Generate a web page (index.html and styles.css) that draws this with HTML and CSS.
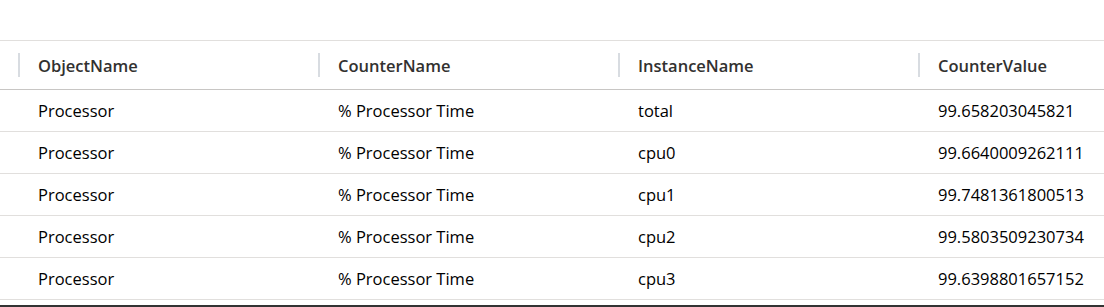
FILE: index.html
```html
<!DOCTYPE html>
<html lang="en">
<head>
<meta charset="utf-8">
<title>Results</title>
<link rel="stylesheet" href="styles.css">
</head>
<body>
<div class="results">
  <div class="grid">
    <div class="row head">
      <div class="cell"><span class="sep"></span>ObjectName</div>
      <div class="cell"><span class="sep"></span>CounterName</div>
      <div class="cell"><span class="sep"></span>InstanceName</div>
      <div class="cell"><span class="sep"></span>CounterValue</div>
    </div>
    <div class="row">
      <div class="cell">Processor</div>
      <div class="cell">% Processor Time</div>
      <div class="cell">total</div>
      <div class="cell">99.658203045821</div>
    </div>
    <div class="row">
      <div class="cell">Processor</div>
      <div class="cell">% Processor Time</div>
      <div class="cell">cpu0</div>
      <div class="cell">99.6640009262111</div>
    </div>
    <div class="row">
      <div class="cell">Processor</div>
      <div class="cell">% Processor Time</div>
      <div class="cell">cpu1</div>
      <div class="cell">99.7481361800513</div>
    </div>
    <div class="row">
      <div class="cell">Processor</div>
      <div class="cell">% Processor Time</div>
      <div class="cell">cpu2</div>
      <div class="cell">99.5803509230734</div>
    </div>
    <div class="row">
      <div class="cell">Processor</div>
      <div class="cell">% Processor Time</div>
      <div class="cell">cpu3</div>
      <div class="cell">99.6398801657152</div>
    </div>
  </div>
  <div class="scrollbar"></div>
</div>
</body>
</html>
```
FILE: styles.css
```css
html, body {
  margin: 0;
  padding: 0;
  background: #ffffff;
}
body {
  font-family: "Open Sans", "Noto Sans", sans-serif;
  font-size: 16.5px;
  color: #000000;
  width: 1104px;
  height: 307px;
  overflow: hidden;
}
.results {
  padding-top: 40px;
  display: flex;
  flex-direction: column;
  overflow: hidden;
}
.grid {
  border-top: 1px solid #e1dfdd;
  display: flex;
  flex-direction: column;
}
.row {
  display: flex;
  height: 41px;
  align-items: center;
  padding-left: 18px;
  border-bottom: 1px solid #e1dfdd;
}
.row.head {
  height: 48px;
  border-bottom-color: #c8c6c4;
  color: #323130;
  font-weight: 600;
}
.cell {
  flex: 0 0 300px;
  height: 100%;
  display: flex;
  align-items: center;
  padding-left: 20px;
  box-sizing: border-box;
  white-space: nowrap;
}
.sep {
  width: 2px;
  height: 24px;
  background: #d8dce1;
  margin-left: -20px;
  margin-right: 18px;
  flex: 0 0 2px;
}
.scrollbar {
  margin-top: 5px;
  height: 2px;
  background: #333333;
}
```
